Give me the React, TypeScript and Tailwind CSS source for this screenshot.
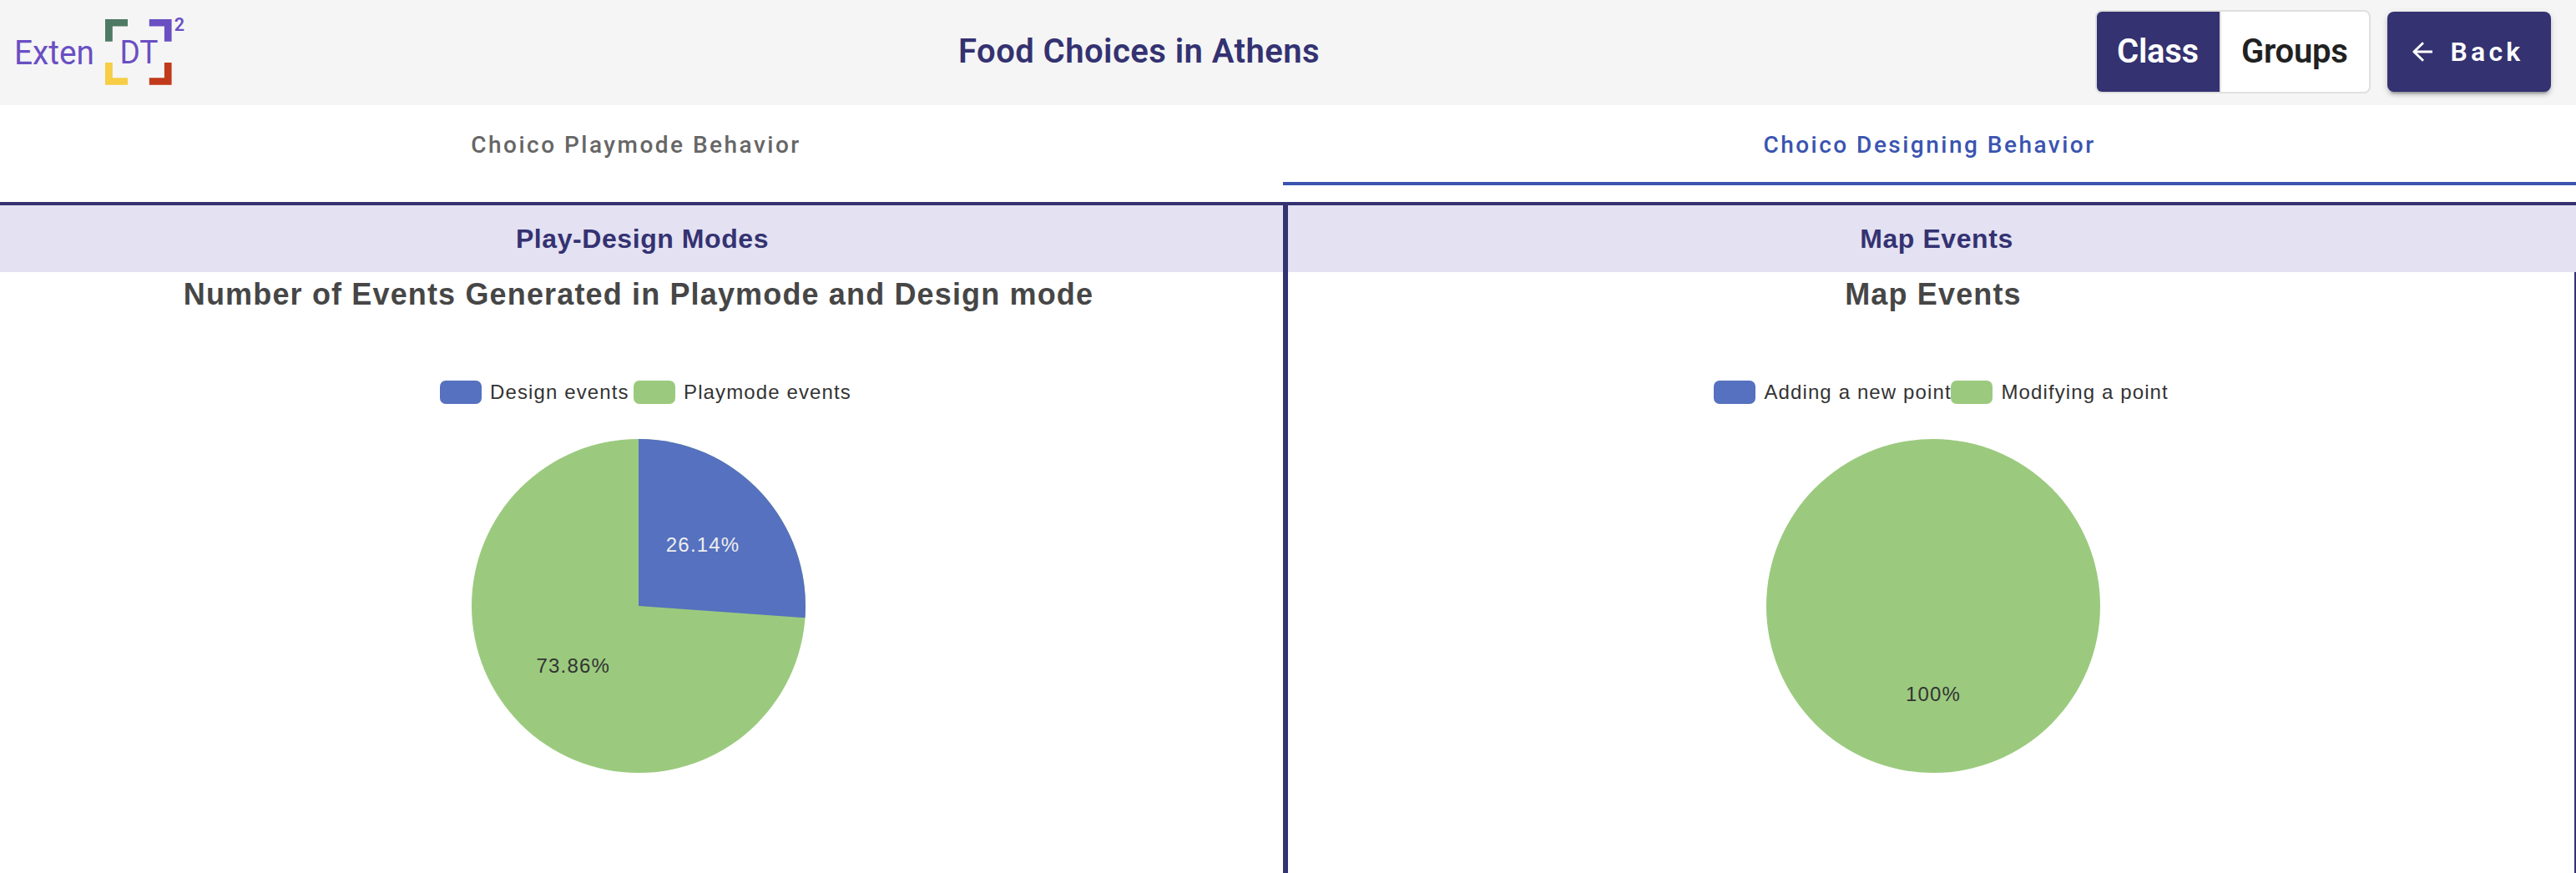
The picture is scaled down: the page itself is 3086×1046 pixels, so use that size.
type Slice = { label: string; color: string };

const BLUE = "#5571bf";
const GREEN = "#9bca7e";

function Logo() {
  return (
    <svg className="h-[126px] w-[240px] shrink-0" viewBox="0 0 240 126" fontFamily="Roboto, sans-serif" fill="#6a4fc3">
      <path d="M126 23h27v8.4h-18.2v18.3h-8.8z" fill="#4e7a63" />
      <path d="M178.8 23h26.8v26.7h-8.7v-18.3h-18.1z" />
      <path d="M126 75h8.8v18.2h18.2v8.5h-27z" fill="#f6cd45" />
      <path d="M196.9 75h8.7v26.7h-26.8v-8.5h18.1z" fill="#c13a1b" />
      <text x="17" y="76.7" fontSize="40" textLength="96" lengthAdjust="spacingAndGlyphs">Exten</text>
      <text x="143.4" y="76.3" fontSize="38.5" textLength="46" lengthAdjust="spacingAndGlyphs">DT</text>
      <text x="208.8" y="37.3" fontSize="21.5" fontWeight="600">2</text>
    </svg>
  );
}

function Header() {
  return (
    <header className="flex h-[126px] items-start bg-[#f5f5f5] pr-[30px]">
      <Logo />
      <h1 className="ml-[908px] whitespace-nowrap text-[40px] leading-[123px] font-semibold tracking-[0.46px] text-[#343271]">
        Food Choices in Athens
      </h1>
      <div className="mt-3 ml-auto flex h-[100px] w-[330px] overflow-hidden rounded-lg border-2 border-[#e0e0e0] bg-white text-[40px] leading-[95px] font-semibold tracking-[-0.25px]">
        <button className="flex w-[147px] items-start bg-[#343271] pl-[24px] text-white">Class</button>
        <button className="flex flex-1 items-start border-l-2 border-[#e0e0e0] pl-[24px] text-[#212121]">Groups</button>
      </div>
      <button className="mt-3.5 ml-5 flex h-24 w-[196px] items-center rounded-lg bg-[#343271] pl-[30px] text-[32px] leading-[96px] font-semibold tracking-[4.2px] text-white shadow-[0_6px_2px_-4px_rgba(0,0,0,0.2),0_4px_4px_rgba(0,0,0,0.14),0_2px_10px_rgba(0,0,0,0.12)]">
        <svg className="h-6 w-6 shrink-0" viewBox="0 0 24 24" fill="none" stroke="currentColor" strokeWidth="2.9">
          <path d="M24 12H2M13 1.3L1.9 12L13 22.7" strokeLinejoin="round" />
        </svg>
        <span className="ml-[21.5px]">Back</span>
      </button>
    </header>
  );
}

function Tabs() {
  return (
    <nav className="flex h-24 text-[28px] leading-[95px] font-medium tracking-[2.48px]">
      <button className="flex w-[1537px] items-start justify-center pr-[13px] text-[#666666]">
        Choico Playmode Behavior
      </button>
      <button className="flex h-24 flex-1 items-start justify-center border-b-4 border-[#3a54b0] text-[#3a54b0]">
        Choico Designing Behavior
      </button>
    </nav>
  );
}

function LegendItem({ label, color, className }: Slice & { className: string }) {
  return (
    <div className={`flex items-start ${className}`}>
      <span className="h-7 w-[50px] shrink-0 rounded-[7px]" style={{ backgroundColor: color }} />
      <span className="ml-[10px] whitespace-nowrap text-[24px] leading-[27px] tracking-[1.12px] text-[#333333]">
        {label}
      </span>
    </div>
  );
}

function ModesPie() {
  const angle = 0.2614 * 2 * Math.PI;
  const x = 200 + 200 * Math.sin(angle);
  const y = 200 - 200 * Math.cos(angle);
  return (
    <svg className="mx-auto mt-[42px] block h-[400px] w-[400px]" viewBox="0 0 400 400" fontSize="24" letterSpacing="1.2">
      <circle cx="200" cy="200" r="200" fill={GREEN} />
      <path d={`M200 200V0A200 200 0 0 1 ${x} ${y}Z`} fill={BLUE} />
      <text x="232.8" y="135" fill="#eeeeee">26.14%</text>
      <text x="77.5" y="280" fill="#333333">73.86%</text>
    </svg>
  );
}

function MapPie() {
  return (
    <svg className="mx-auto mt-[42px] block h-[400px] w-[400px]" viewBox="0 0 400 400" fontSize="24" letterSpacing="1.2">
      <circle cx="200" cy="200" r="200" fill={GREEN} />
      <text x="200" y="314" textAnchor="middle" fill="#333333">100%</text>
    </svg>
  );
}

const bandClass =
  "h-20 bg-[#e3e1f2] text-center text-[32px] leading-[80px] font-bold tracking-[0.57px] text-[#343271]";
const chartTitleClass =
  "text-center text-[36px] leading-[53px] font-bold tracking-[1.15px] text-[#464646]";

export default function App() {
  return (
    <div className="flex h-[1046px] w-[3086px] flex-col overflow-hidden bg-white font-[Roboto,sans-serif]">
      <Header />
      <Tabs />
      <main className="mt-5 flex flex-1 border-t-4 border-[#343271] font-['Liberation_Sans',Arial,sans-serif]">
        <section className="w-[1543px] border-r-6 border-[#343271]">
          <h2 className={`${bandClass} pl-[2px]`}>Play-Design Modes</h2>
          <div className="w-[1530px]">
            <h3 className={chartTitleClass}>Number of Events Generated in Playmode and Design mode</h3>
            <div className="mt-[77px] flex h-7 pl-[527px]">
              <LegendItem label="Design events" color={BLUE} className="w-[232px]" />
              <LegendItem label="Playmode events" color={GREEN} className="w-[270px]" />
            </div>
            <ModesPie />
          </div>
        </section>
        <section className="flex flex-1 flex-col">
          <h2 className={`${bandClass} pl-[11px]`}>Map Events</h2>
          <div className="flex-1 border-r-2 border-[#343271] pl-2">
            <div className="w-[1530px]">
              <h3 className={chartTitleClass}>Map Events</h3>
              <div className="mt-[77px] flex h-7 pl-[502.4px]">
                <LegendItem label="Adding a new point" color={BLUE} className="w-[284px]" />
                <LegendItem label="Modifying a point" color={GREEN} className="w-[270px]" />
              </div>
              <MapPie />
            </div>
          </div>
        </section>
      </main>
    </div>
  );
}
